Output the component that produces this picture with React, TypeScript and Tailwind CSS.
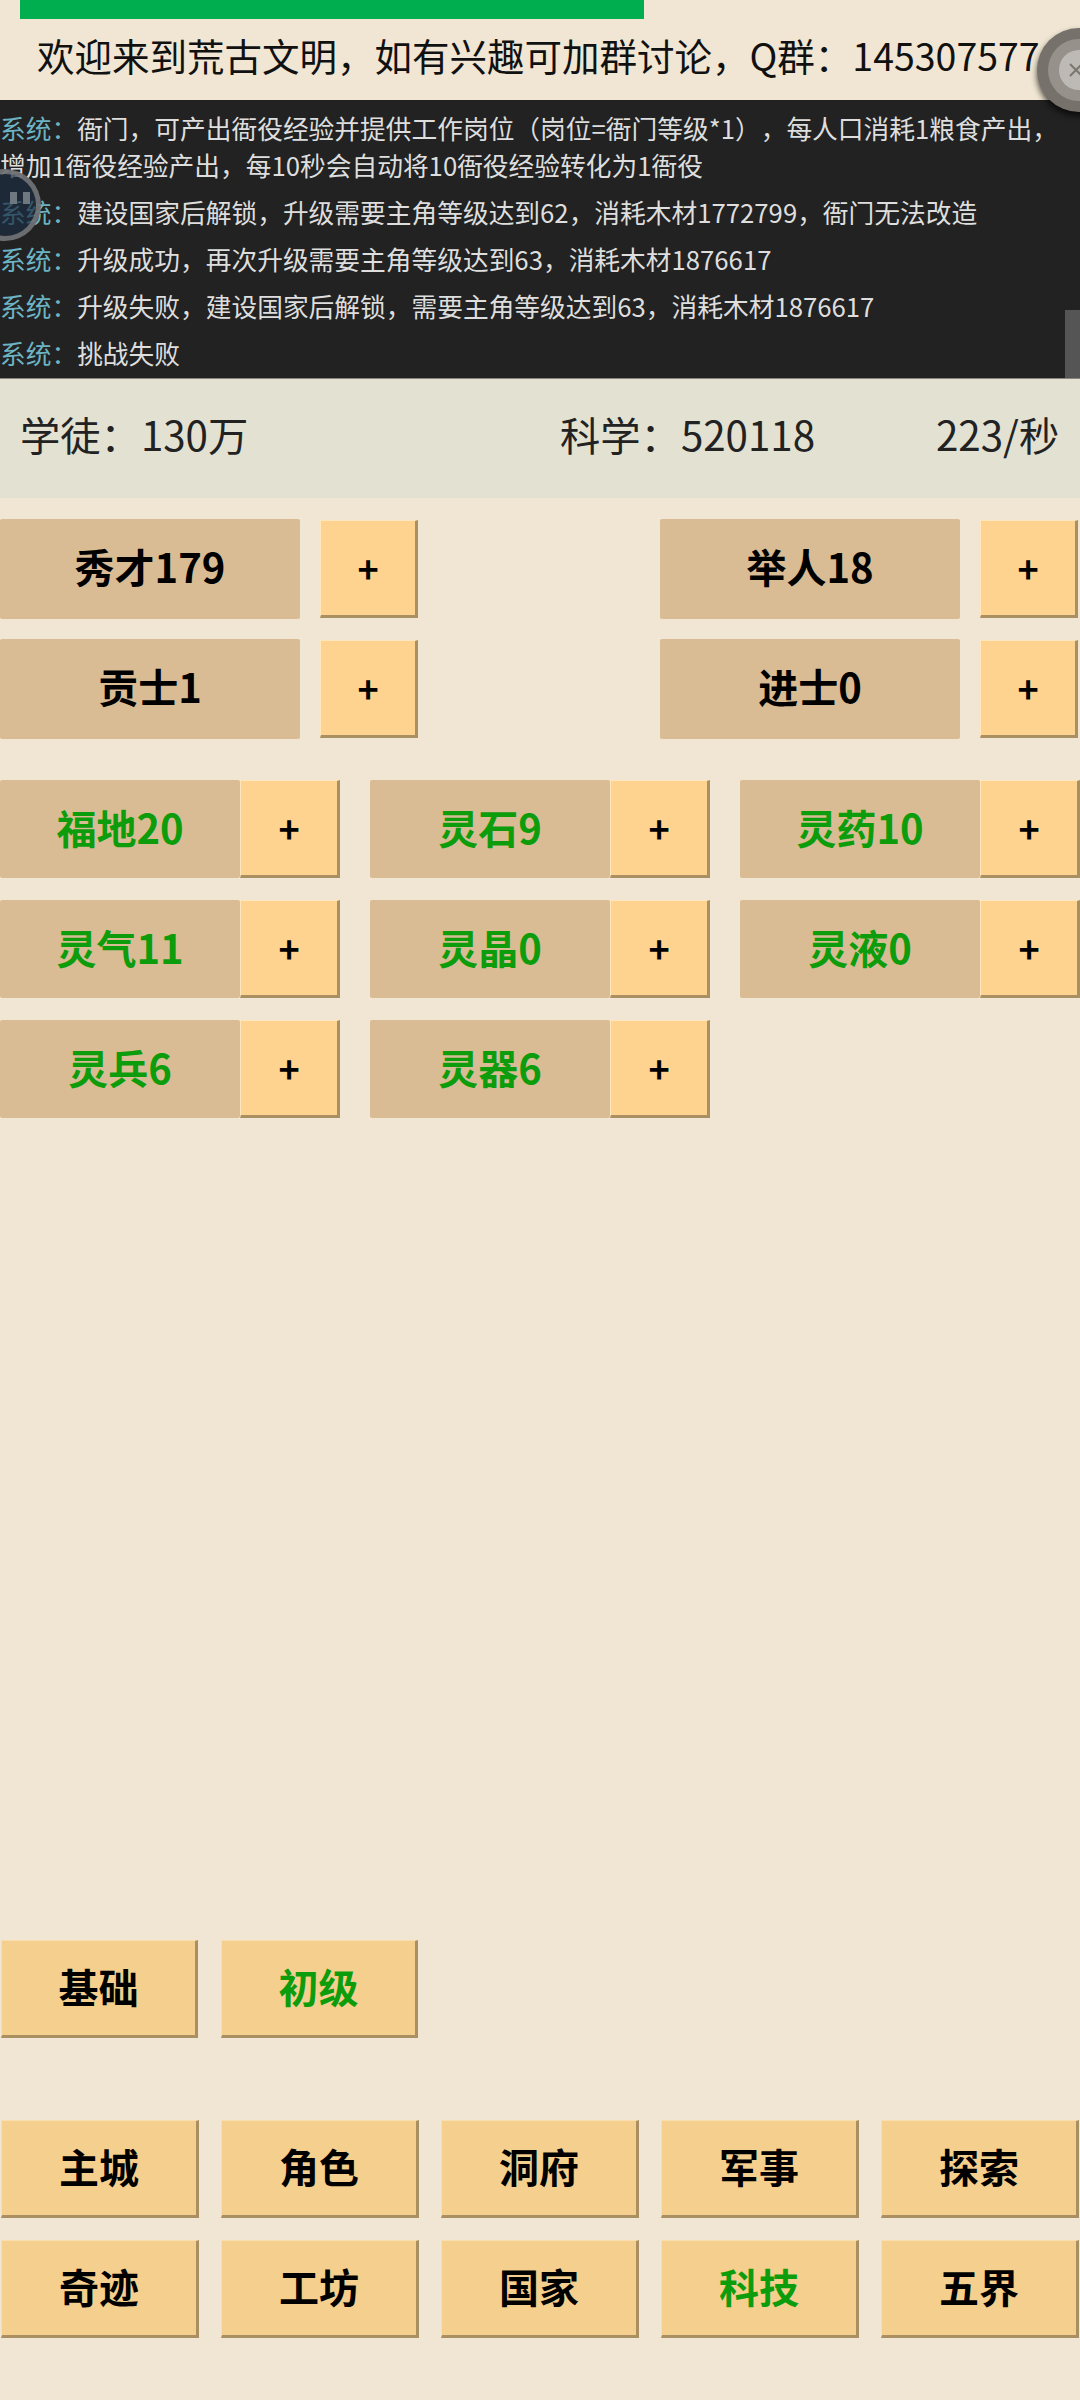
const cjk = { fontFamily: '"Noto Sans CJK SC", "Noto Sans", sans-serif' };

function Plus({ className }: { className: string }) {
  return (
    <button className={`h-[98px] bg-[#fed28f] border-l border-t border-l-[#ffe6bd] border-t-[#ffe6bd] border-r-[3px] border-b-[3px] border-r-[#a98f62] border-b-[#a98f62] text-[36px] leading-none font-bold text-black flex items-center justify-center pb-[3px] ${className}`}>
      +
    </button>
  );
}

function Label({ text, green, className }: { text: string; green?: boolean; className: string }) {
  return (
    <div className={`bg-[#dabc94] rounded-[2px] text-[40px] font-bold flex items-center justify-center ${green ? 'text-[#0c9c0c] pb-[4px]' : 'text-black pb-[7px]'} ${className}`}>
      {text}
    </div>
  );
}

function Nav({ text, green, className }: { text: string; green?: boolean; className: string }) {
  return (
    <button className={`h-[98px] bg-[#f5cf8d] border-l border-t border-l-[#f9dfae] border-t-[#f9dfae] border-r-[3px] border-b-[3px] border-r-[#a98f62] border-b-[#a98f62] text-[40px] font-bold flex items-center justify-center pb-[4px] ${green ? 'text-[#0c9c0c]' : 'text-black'} ${className}`}>
      {text}
    </button>
  );
}

function Log({ children }: { children: React.ReactNode }) {
  return (
    <div className="text-[25.72px] leading-[37px] text-[#dedede] mb-[10px] whitespace-nowrap [text-spacing-trim:space-all]">
      <span className="text-[#6cb4c4]">系统：</span>
      {children}
    </div>
  );
}

const three = [
  ['福地20', '灵石9', '灵药10'],
  ['灵气11', '灵晶0', '灵液0'],
  ['灵兵6', '灵器6'],
];

export default function App() {
  return (
    <div className="relative w-[1080px] h-[2400px] bg-[#f0e6d3] overflow-hidden" style={cjk}>
      <div className="ml-5 w-[624px] h-[19px] bg-[#00ae50]" />
      <div className="h-[81px] pl-[37px] pb-[8px] flex items-center text-[37.5px] text-[#111] whitespace-nowrap">
        欢迎来到荒古文明，如有兴趣可加群讨论，Q群：145307577
      </div>
      <div className="relative h-[279px] bg-[#222222] pt-[9px] overflow-hidden border-b border-b-[#8a8578]">
        <Log>
          衙门，可产出衙役经验并提供工作岗位（岗位=衙门等级*1），每人口消耗1粮食产出，
          <br />
          增加1衙役经验产出，每10秒会自动将10衙役经验转化为1衙役
        </Log>
        <Log>建设国家后解锁，升级需要主角等级达到62，消耗木材1772799，衙门无法改造</Log>
        <Log>升级成功，再次升级需要主角等级达到63，消耗木材1876617</Log>
        <Log>升级失败，建设国家后解锁，需要主角等级达到63，消耗木材1876617</Log>
        <Log>挑战失败</Log>
        <div className="absolute right-0 bottom-0 w-[15px] h-[68px] bg-[#555555]" />
      </div>
      <div className="h-[119px] bg-[#e3e1d2] flex items-center text-[40.3px] text-[#222] pb-[8px]">
        <span className="ml-5 w-[540px]">学徒：130万</span>
        <span className="w-[376px]">科学：520118</span>
        <span>223/秒</span>
      </div>

      <div className="mt-[21px] flex flex-col gap-5">
        <div className="flex">
          <Label text="秀才179" className="w-[300px] h-[100px]" />
          <Plus className="ml-5 mt-px w-[98px]" />
          <Label text="举人18" className="ml-[242px] w-[300px] h-[100px]" />
          <Plus className="ml-5 mt-px w-[98px]" />
        </div>
        <div className="flex">
          <Label text="贡士1" className="w-[300px] h-[100px]" />
          <Plus className="ml-5 mt-px w-[98px]" />
          <Label text="进士0" className="ml-[242px] w-[300px] h-[100px]" />
          <Plus className="ml-5 mt-px w-[98px]" />
        </div>
      </div>

      <div className="mt-[41px] flex flex-col gap-[22px]">
        {three.map((row, i) => (
          <div key={i} className="flex gap-[30px]">
            {row.map((t) => (
              <div key={t} className="flex">
                <Label text={t} green className="w-[240px] h-[98px]" />
                <Plus className="w-[100px]" />
              </div>
            ))}
          </div>
        ))}
      </div>

      <div className="mt-[822px] ml-px flex gap-[23px]">
        <Nav text="基础" className="w-[197px]" />
        <Nav text="初级" green className="w-[197px]" />
      </div>

      <div className="mt-[82px] ml-px mr-px grid grid-cols-5 gap-x-[22px] gap-y-[22px]">
        {['主城', '角色', '洞府', '军事', '探索', '奇迹', '工坊', '国家', '科技', '五界'].map((t) => (
          <Nav key={t} text={t} green={t === '科技'} className="w-full" />
        ))}
      </div>

      <div className="absolute left-[1037px] top-[28px] w-[84px] h-[84px] rounded-full bg-[#76716a] shadow-[0_4px_6px_rgba(0,0,0,0.7)] flex items-center justify-center">
        <div className="w-[62px] h-[62px] rounded-full bg-[#96928b] flex items-center justify-center">
          <div className="w-[40px] h-[40px] rounded-full bg-[#bdbab5] flex items-center justify-center pr-[6px]">
            <svg width="18" height="18" viewBox="0 0 18 18" fill="none" stroke="#7a7770" strokeWidth="2">
              <path d="M3 3l12 12M15 3L3 15" />
            </svg>
          </div>
        </div>
      </div>
      <div className="absolute left-[-31px] top-[169px] w-[72px] h-[72px] rounded-full bg-[#1c2c42]/70 border-[5px] border-[#7d7d7d]/80" />
      <div className="absolute left-[10px] top-[192px] w-[7px] h-[12px] bg-[#6f7780]" />
      <div className="absolute left-[23px] top-[192px] w-[7px] h-[12px] bg-[#6f7780]" />
    </div>
  );
}
